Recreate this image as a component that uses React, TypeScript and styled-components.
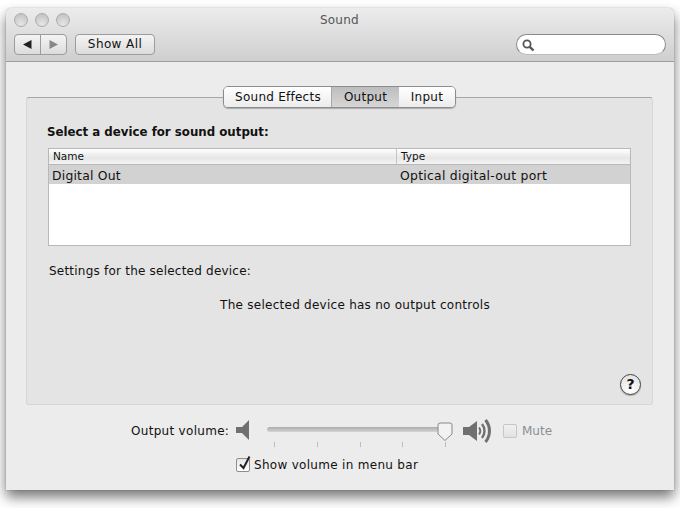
import React from "react";
import styled, { createGlobalStyle } from "styled-components";

const Global = createGlobalStyle`
  html, body { margin: 0; padding: 0; background: #fff; }
  body { font-family: "DejaVu Sans", "Liberation Sans", sans-serif; color: #111; }
  #root { width: 680px; height: 508px; overflow: hidden; }
`;
const Page = styled.div`
  padding: 8px 6px 0 6px;
`;
const Win = styled.div`
  width: 668px;
  height: 482px;
  box-sizing: border-box;
  background: #ececec;
  border-radius: 5px 5px 0 0;
  box-shadow: 0 0 1px rgba(0,0,0,.5), 0 7px 13px rgba(0,0,0,.55);
  display: flex;
  flex-direction: column;
`;
const TitleBar = styled.div`
  height: 54px;
  flex: none;
  box-sizing: border-box;
  padding: 4px 8px 0 8px;
  background: linear-gradient(#ececec, #cfcfcf);
  border-bottom: 1px solid #9d9d9d;
  border-radius: 5px 5px 0 0;
`;
const TopRow = styled.div`
  display: flex;
  align-items: center;
  height: 15px;
`;
const Lights = styled.div`
  display: flex;
  gap: 7px;
`;
const Light = styled.span`
  width: 14px;
  height: 14px;
  border-radius: 50%;
  background: radial-gradient(circle at 50% 85%, #e6e6e6, #bdbdbd);
  border: 1px solid #adadad;
  box-sizing: border-box;
`;
const Title = styled.div`
  margin-left: 250px;
  font-size: 12px;
  letter-spacing: .2px;
  color: #555;
`;
const ToolRow = styled.div`
  display: flex;
  align-items: center;
  margin-top: 7px;
`;
const Nav = styled.div`
  display: flex;
  width: 53px;
  height: 21px;
  box-sizing: border-box;
  border: 1px solid #9c9c9c;
  border-radius: 4px;
  background: linear-gradient(#f4f4f4, #dcdcdc);
  overflow: hidden;
`;
const NavBtn = styled.div<{ $sep?: boolean }>`
  flex: 1;
  display: flex;
  align-items: center;
  justify-content: center;
  border-left: ${(p) => (p.$sep ? "1px solid #9c9c9c" : "none")};
`;
const ShowAll = styled.div`
  margin-left: 8px;
  width: 80px;
  height: 21px;
  box-sizing: border-box;
  border: 1px solid #9c9c9c;
  border-radius: 4px;
  background: linear-gradient(#f4f4f4, #dcdcdc);
  font-size: 12px;
  letter-spacing: .4px;
  text-align: center;
  line-height: 18px;
`;
const Search = styled.div`
  margin-left: auto;
  width: 150px;
  height: 21px;
  box-sizing: border-box;
  border: 1px solid #8a8a8a;
  border-bottom-color: #bbb;
  border-radius: 11px;
  background: #fff;
  display: flex;
  align-items: center;
  padding-left: 4px;
`;
const Content = styled.div`
  flex: 1;
  display: flex;
  flex-direction: column;
  padding: 24px 21px 0 20px;
`;
const Tabs = styled.div`
  align-self: center;
  display: flex;
  position: relative;
  z-index: 1;
  height: 22px;
  box-sizing: border-box;
  border: 1px solid #8c8c8c;
  border-radius: 5px;
  background: #fff;
  overflow: hidden;
  box-shadow: 0 1px 1px rgba(0,0,0,.25);
`;
const Tab = styled.div<{ $w: number; $on?: boolean }>`
  width: ${(p) => p.$w}px;
  font-size: 12px;
  letter-spacing: .25px;
  line-height: 20px;
  text-align: center;
  padding-left: ${(p) => (p.$w === 107 ? "1px" : "0")};
  background: ${(p) =>
    p.$on ? "linear-gradient(#bdbdbd, #d6d6d6)" : "linear-gradient(#fff, #ececec)"};
  border-left: ${(p) => (p.$on ? "1px solid #a8a8a8" : "none")};
  box-sizing: border-box;
`;
const Panel = styled.div`
  margin-top: -11px;
  height: 308px;
  box-sizing: border-box;
  background: #e4e4e4;
  border: 1px solid #d6d6d6;
  border-top: 1px solid #a6a6a6;
  border-radius: 3px;
  padding: 27px 21px 0 21px;
  display: flex;
  flex-direction: column;
`;
const Heading = styled.div`
  margin-left: -1px;
  font-size: 11.8px;
  font-weight: bold;
  line-height: 15px;
`;
const Table = styled.div`
  margin-top: 8px;
  height: 98px;
  box-sizing: border-box;
  background: #fff;
  border: 1px solid #b8b8b8;
`;
const HeadRow = styled.div`
  display: grid;
  grid-template-columns: 347px 1fr;
  height: 16px;
  box-sizing: border-box;
  background: linear-gradient(#fff, #e6e6e6 60%, #f4f4f4);
  border-bottom: 1px solid #b8b8b8;
`;
const HeadCell = styled.div<{ $sep?: boolean }>`
  font-size: 10.5px;
  line-height: 15px;
  padding-left: 4px;
  border-left: ${(p) => (p.$sep ? "1px solid #c4c4c4" : "none")};
`;
const SelRow = styled.div`
  display: grid;
  grid-template-columns: 347px 1fr;
  height: 19px;
  background: #d2d2d2;
`;
const Cell = styled.div<{ $second?: boolean }>`
  font-size: 12.4px;
  letter-spacing: ${(p) => (p.$second ? ".27px" : ".2px")};
  line-height: 21px;
  padding-left: ${(p) => (p.$second ? "4px" : "3px")};
`;
const Settings = styled.div`
  margin-top: 18px;
  margin-left: 1px;
  font-size: 12px;
  letter-spacing: .22px;
  line-height: 15px;
`;
const NoControls = styled.div`
  margin-top: 19px;
  margin-left: 31px;
  text-align: center;
  font-size: 12px;
  letter-spacing: .26px;
  line-height: 15px;
`;
const HelpRow = styled.div`
  margin-top: auto;
  margin-bottom: 9px;
  margin-right: -10px;
  align-self: flex-end;
`;
const Help = styled.div`
  width: 21px;
  height: 21px;
  box-sizing: border-box;
  border-radius: 50%;
  border: 1px solid #444;
  background: radial-gradient(circle at 50% 85%, #fff, #dedede);
  font-size: 14px;
  font-weight: bold;
  text-align: center;
  line-height: 19px;
  box-shadow: 0 1px 1px rgba(0,0,0,.3);
`;
const VolumeRow = styled.div`
  display: flex;
  align-items: flex-start;
  margin-top: 14px;
  height: 38px;
  padding-left: 105px;
`;
const VolLabel = styled.div`
  font-size: 12px;
  letter-spacing: .3px;
  line-height: 16px;
  width: 100px;
  margin-top: 4px;
  white-space: nowrap;
`;
const SliderWrap = styled.div`
  position: relative;
  margin-left: 18px;
  width: 183px;
  height: 30px;
`;
const Track = styled.div`
  margin-top: 8px;
  height: 5px;
  border-radius: 3px;
  background: linear-gradient(#adadad, #d4d4d4);
`;
const Ticks = styled.div`
  display: flex;
  justify-content: space-between;
  padding-left: 7px;
  margin-top: 10px;
  width: 179px;
  box-sizing: border-box;
`;
const Tick = styled.span`
  width: 1px;
  height: 5px;
  background: #bdbdbd;
`;
const Thumb = styled.svg`
  position: absolute;
  right: -3px;
  top: 3px;
`;
const SpeakerSmall = styled.svg`
  margin-left: 5px;
  margin-top: 1px;
  flex: none;
`;
const SpeakerBig = styled.svg`
  margin-left: 13px;
  margin-top: -1px;
  flex: none;
`;
const Check = styled.span<{ $off?: boolean }>`
  width: 14px;
  height: 14px;
  box-sizing: border-box;
  flex: none;
  border: 1px solid ${(p) => (p.$off ? "#c6c6c6" : "#8e8e8e")};
  border-radius: 2px;
  background: ${(p) => (p.$off ? "linear-gradient(#f0f0f0, #e2e2e2)" : "linear-gradient(#e6e6e6, #fff)")};
  position: relative;
`;
const MuteBox = styled.div`
  display: flex;
  align-items: center;
  gap: 5px;
  margin-left: 10px;
  margin-top: 4px;
  font-size: 12px;
  line-height: 16px;
  color: #8a9097;
`;
const ShowRow = styled.div`
  display: flex;
  align-items: center;
  gap: 4px;
  padding-left: 210px;
  font-size: 12px;
  letter-spacing: .3px;
  line-height: 16px;
`;
const CheckMark = styled.svg`
  position: absolute;
  left: 0;
  top: -4px;
`;

export default function App() {
  return (
    <Page>
      <Global />
      <Win>
        <TitleBar>
          <TopRow>
            <Lights>
              <Light />
              <Light />
              <Light />
            </Lights>
            <Title>Sound</Title>
          </TopRow>
          <ToolRow>
            <Nav>
              <NavBtn>
                <svg width="9" height="9" viewBox="0 0 9 9"><path d="M0 4.5 8.5 0v9z" fill="#222" /></svg>
              </NavBtn>
              <NavBtn $sep>
                <svg width="9" height="9" viewBox="0 0 9 9"><path d="M9 4.5 .5 0v9z" fill="#888" /></svg>
              </NavBtn>
            </Nav>
            <ShowAll>Show All</ShowAll>
            <Search>
              <svg width="14" height="14" viewBox="0 0 14 14" fill="none" stroke="#555">
                <circle cx="6" cy="6" r="3.6" strokeWidth="1.8" />
                <path d="M8.8 8.8 12.5 12.5" strokeWidth="2.4" />
              </svg>
            </Search>
          </ToolRow>
        </TitleBar>
        <Content>
          <Tabs>
            <Tab $w={107}>Sound Effects</Tab>
            <Tab $w={68} $on>Output</Tab>
            <Tab $w={56}>Input</Tab>
          </Tabs>
          <Panel>
            <Heading>Select a device for sound output:</Heading>
            <Table>
              <HeadRow>
                <HeadCell>Name</HeadCell>
                <HeadCell $sep>Type</HeadCell>
              </HeadRow>
              <SelRow>
                <Cell>Digital Out</Cell>
                <Cell $second>Optical digital-out port</Cell>
              </SelRow>
            </Table>
            <Settings>Settings for the selected device:</Settings>
            <NoControls>The selected device has no output controls</NoControls>
            <HelpRow>
              <Help>?</Help>
            </HelpRow>
          </Panel>
          <VolumeRow>
            <VolLabel>Output volume:</VolLabel>
            <SpeakerSmall width="13" height="20" viewBox="0 0 13 20">
              <path d="M0 7h6L13 0v20l-7-7H0z" fill="#707070" />
            </SpeakerSmall>
            <SliderWrap>
              <Track />
              <Ticks>
                <Tick /><Tick /><Tick /><Tick /><Tick />
              </Ticks>
              <Thumb width="16" height="20" viewBox="0 0 16 20">
                <path d="M1 3a2 2 0 0 1 2-2h10a2 2 0 0 1 2 2v9l-7 6.500-7-6.500z" fill="#f2f2f2" stroke="#888" />
              </Thumb>
            </SliderWrap>
            <SpeakerBig width="30" height="26" viewBox="0 0 30 26">
              <path d="M0 9h6l8-6v20l-8-6H0z" fill="#707070" />
              <g fill="none" stroke="#707070">
                <path d="M16 9.500c1.500 2 1.500 5 0 7" strokeWidth="2" />
                <path d="M19 6c3.300 4 3.300 10 0 14" strokeWidth="2.400" />
                <path d="M22.500 2c5.300 6.500 5.300 15.500 0 22" strokeWidth="3" />
              </g>
            </SpeakerBig>
            <MuteBox>
              <Check $off />
              Mute
            </MuteBox>
          </VolumeRow>
          <ShowRow>
            <Check>
              <CheckMark width="15" height="17" viewBox="0 0 15 17">
                <path d="M3 9.500 6.500 13 12.500 1.500" fill="none" stroke="#222" strokeWidth="2" />
              </CheckMark>
            </Check>
            Show volume in menu bar
          </ShowRow>
        </Content>
      </Win>
    </Page>
  );
}
